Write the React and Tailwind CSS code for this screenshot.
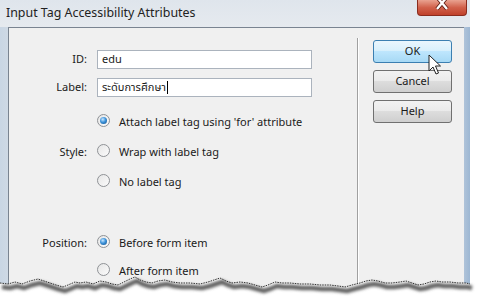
import React from 'react';

// jagged bottom edge of the torn screenshot
const edge = [
  [0, 283], [8, 284], [15, 282], [22, 284], [30, 281], [38, 279], [44, 281], [50, 283], [56, 285], [63, 287],
  [68, 285], [75, 282], [80, 283], [86, 282], [93, 284], [100, 281], [106, 282], [112, 284], [118, 285], [124, 282],
  [130, 279], [135, 277], [140, 280], [146, 282], [152, 283], [158, 281], [165, 280], [172, 282], [180, 283], [190, 283],
  [200, 284], [208, 282], [214, 280], [220, 278], [226, 281], [232, 283], [240, 282], [248, 283], [255, 285], [262, 287],
  [268, 285], [275, 282], [282, 283], [290, 283], [300, 284], [310, 284], [320, 285], [330, 285], [338, 286], [345, 287],
  [352, 285], [360, 283], [366, 281], [372, 280], [378, 281], [385, 283], [392, 283], [400, 282], [406, 281], [412, 283],
  [418, 285], [424, 284], [430, 282], [436, 281], [442, 282], [450, 282], [458, 283], [466, 283], [470, 284],
];

const edgeLine = edge.map(([x, y], i) => `${i ? 'L' : 'M'}${x},${y}`).join(' ');
const edgeFill = `${edgeLine} L479,284 L479,302 L0,302 Z`;

const Radio = ({ checked }) => (
  <span className="mb-[4px] w-[13px] h-[13px] rounded-full border border-[#8f9296] bg-[linear-gradient(135deg,#e6e6e6,#fbfbfb)] flex items-center justify-center shrink-0">
    {checked && (
      <span className="w-[7px] h-[7px] rounded-full bg-[radial-gradient(circle_at_40%_35%,#cbe8ff_0%,#3d93da_45%,#0f4b86_100%)]" />
    )}
  </span>
);

const RadioRow = ({ label, text, checked, className }) => (
  <div className={`flex items-center h-[20px] ${className}`}>
    <span className="w-[78px] mr-[10px] text-right">{label}</span>
    <Radio checked={checked} />
    <span className="ml-[9px]">{text}</span>
  </div>
);

const Button = ({ children, focused }) => (
  <div
    className={
      focused
        ? 'w-[79px] h-[23px] rounded-[3px] border border-[#3c7fb1] bg-[linear-gradient(#eaf6fd,#d9f0fc_45%,#bee6fd_50%,#a7d9f5)] flex items-center justify-center'
        : 'w-[79px] h-[23px] rounded-[3px] border border-[#707070] bg-[linear-gradient(#f2f2f2,#ebebeb_45%,#dddddd_50%,#cfcfcf)] flex items-center justify-center'
    }
  >
    {children}
  </div>
);

export default function App() {
  return (
    <div className="relative w-[479px] h-[302px] bg-white overflow-hidden font-['Noto_Sans','Noto_Sans_Thai',Tahoma,sans-serif] text-[11px] text-[#1a1a1a]">
      <div className="w-[470px] h-[292px] flex flex-col bg-[linear-gradient(90deg,#c9d6e4,#d6dde6_4%,#d6dde6_96%,#9db7d3)]">
        {/* title bar */}
        <div className="h-[27px] flex items-start shrink-0 bg-[linear-gradient(#dfe5ec,#e6eaef)]">
          <span className="pl-[6px] pt-[4px] text-[12.4px] text-[#222]">Input Tag Accessibility Attributes</span>
          <div className="ml-auto mr-[3px] w-[50px] h-[16px] rounded-b-[4px] border border-t-0 border-[#8a2c1e] bg-[linear-gradient(#e9a290,#d1614b_50%,#c0412b)] flex justify-center">
            <svg width="16" height="12" viewBox="0 0 16 12">
              <path d="M3,-3 L13,9 M13,-3 L3,9" stroke="#5a1a10" strokeWidth="4" />
              <path d="M3,-3 L13,9 M13,-3 L3,9" stroke="#fff" strokeWidth="2.4" />
            </svg>
          </div>
        </div>

        <div className="flex flex-1">
          <div className="w-[8px] shrink-0" />
          <div className="flex-1 flex border-l border-t border-[#7a8491] bg-[#f0f0f0]">
            {/* left panel */}
            <div className="w-[348px] pt-[22px] flex flex-col">
              <div className="flex items-center h-[19px]">
                <span className="w-[78px] mr-[10px] text-right">ID:</span>
                <div className="w-[215px] h-[19px] border border-[#abb3bd] bg-white pl-[4px] flex items-center">edu</div>
              </div>
              <div className="flex items-center h-[19px] mt-[9px]">
                <span className="w-[78px] mr-[10px] text-right">Label:</span>
                <div className="w-[215px] h-[19px] border border-[#abb3bd] bg-white pl-[4px] flex items-center">
                  ระดับการศึกษา<span className="w-px h-[13px] bg-black ml-px" />
                </div>
              </div>
              <RadioRow className="mt-[15px]" checked text="Attach label tag using 'for' attribute" />
              <RadioRow className="mt-[10px]" label="Style:" text="Wrap with label tag" />
              <RadioRow className="mt-[10px]" text="No label tag" />
              <RadioRow className="mt-[41px]" label="Position:" checked text="Before form item" />
              <RadioRow className="mt-[8px]" text="After form item" />
            </div>
            {/* separator */}
            <div className="mt-[10px] w-px bg-[#a0a0a0]" />
            <div className="mt-[10px] w-px bg-white" />
            {/* buttons */}
            <div className="pl-[14px] pt-[12px] flex flex-col gap-[7px]">
              <Button focused>OK</Button>
              <Button>Cancel</Button>
              <Button>Help</Button>
            </div>
          </div>
          <div className="w-[6px] shrink-0" />
        </div>
      </div>

      {/* torn edge */}
      <svg className="absolute inset-0" width="479" height="302" viewBox="0 0 479 302">
        <defs>
          <filter id="blur" x="-5%" y="-50%" width="110%" height="200%">
            <feGaussianBlur stdDeviation="1.6" />
          </filter>
        </defs>
        <path d={edgeFill} fill="#fff" />
        <path d={edgeLine} transform="translate(2,4)" fill="none" stroke="#5f5f5f" strokeWidth="4.5" filter="url(#blur)" />
        <path d={edgeLine} fill="none" stroke="#333" strokeWidth="1" strokeDasharray="1.5 1" />
      </svg>

      {/* mouse pointer */}
      <svg className="absolute left-[428px] top-[54px]" width="14" height="22" viewBox="0 0 14 22">
        <path d="M1,1 L1,17 L5,13 L8,20 L10.5,19 L7.5,12 L12.5,12 Z" fill="#fff" stroke="#222" strokeWidth="1" strokeLinejoin="round" />
      </svg>
    </div>
  );
}
